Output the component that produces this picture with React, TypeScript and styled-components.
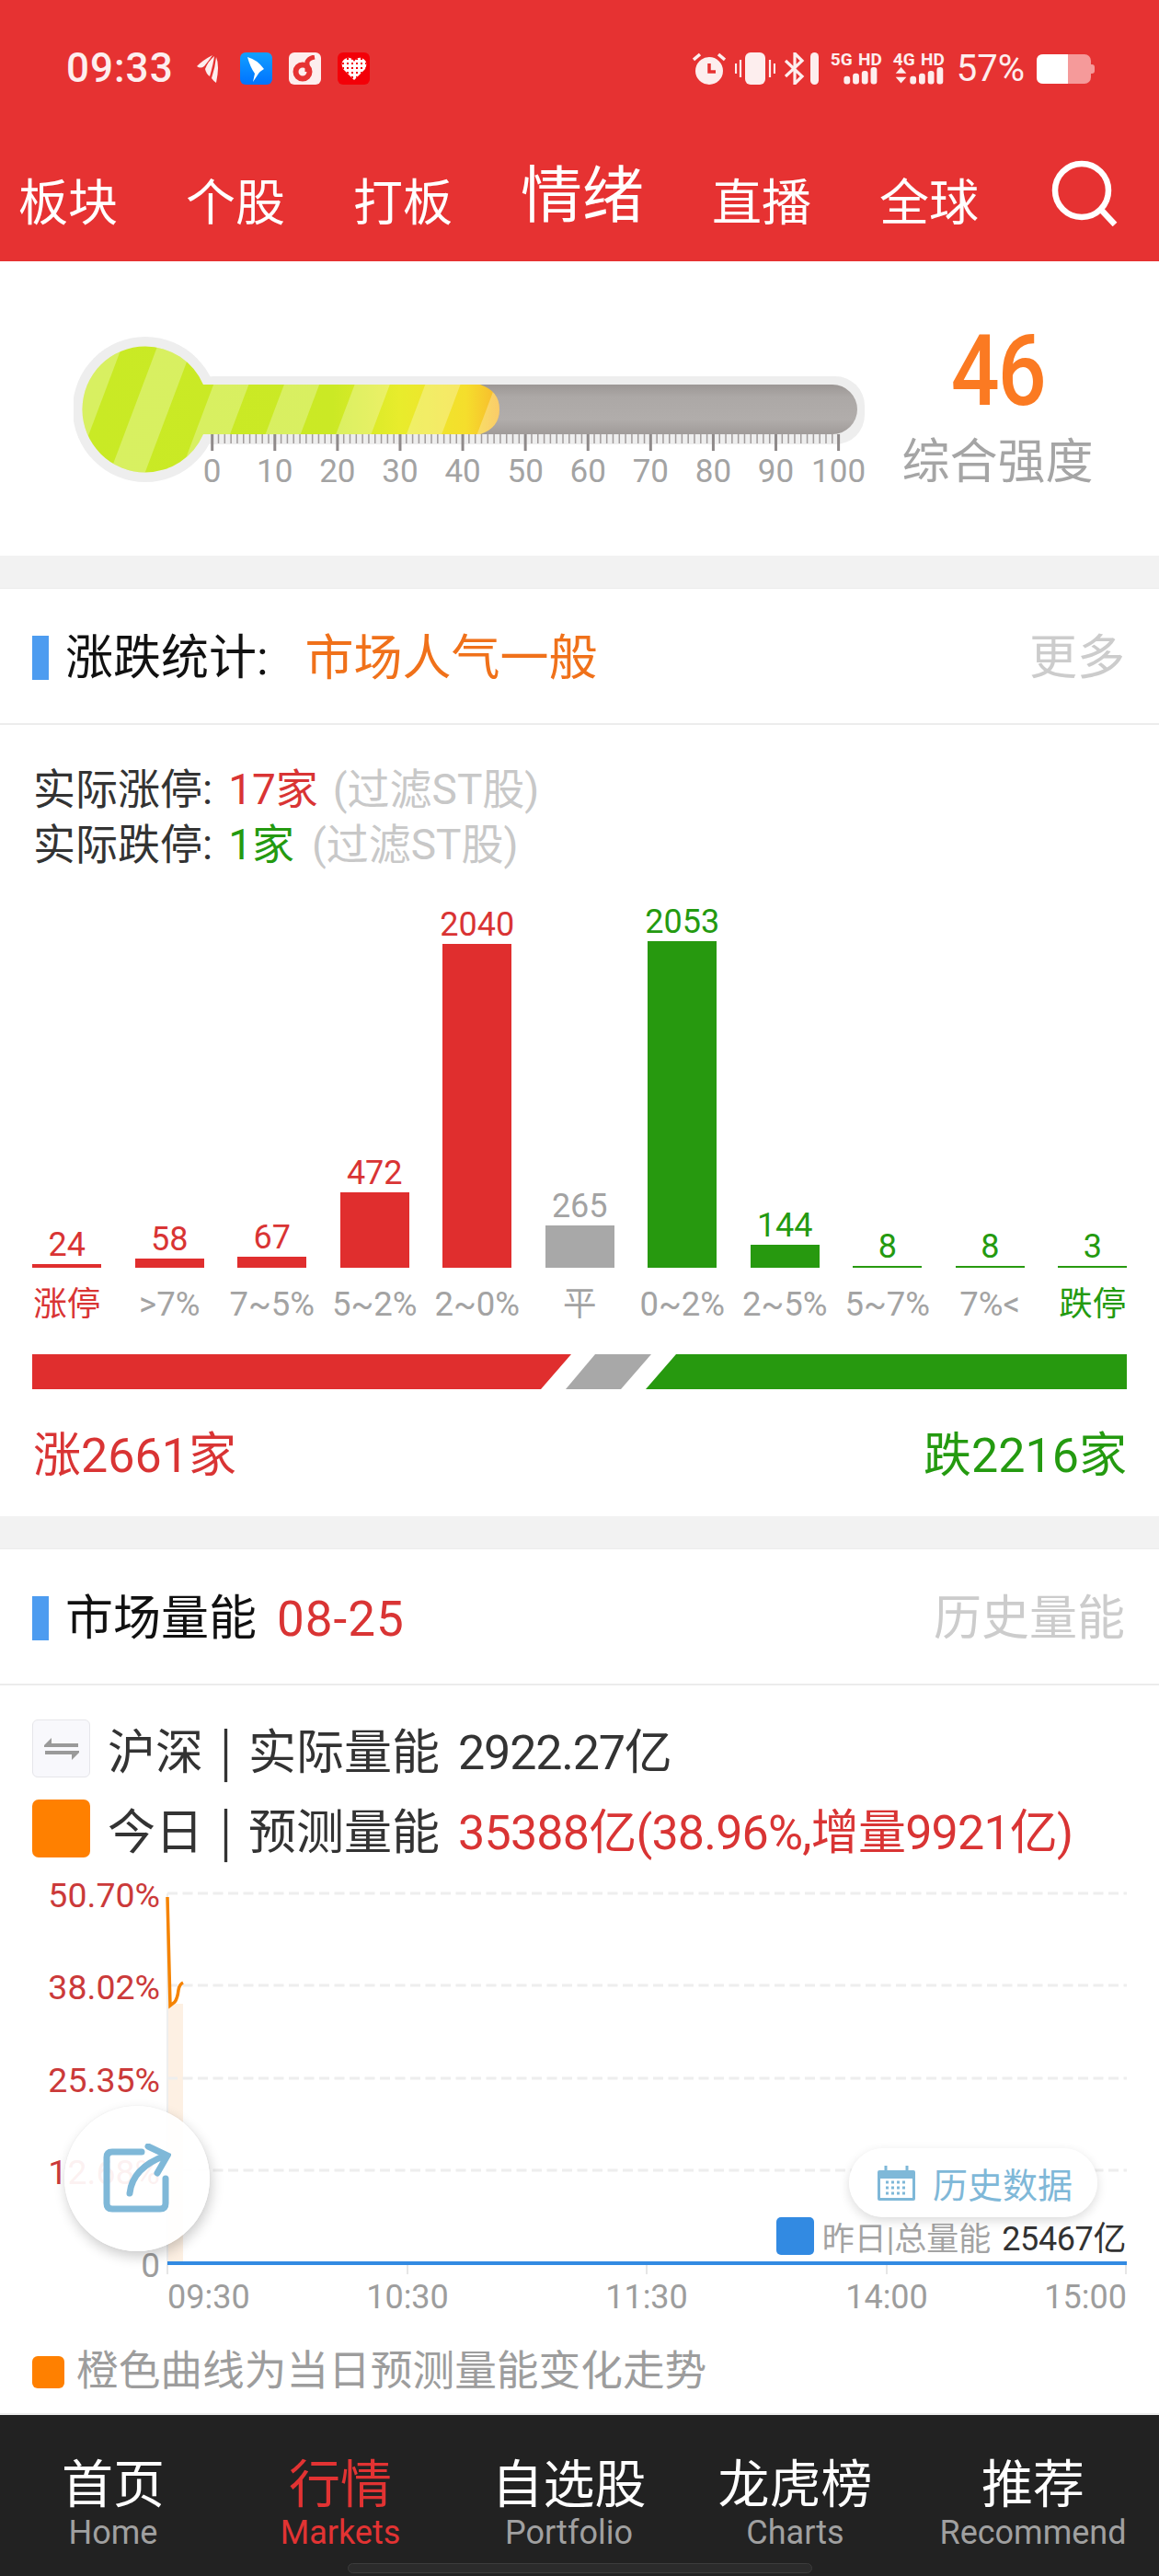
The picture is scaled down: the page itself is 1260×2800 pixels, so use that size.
import React from "react";
import styled, { createGlobalStyle } from "styled-components";

const RED = "#d93434";
const GREEN = "#249a10";
const BLUE_SOFT = "#7fb8d8";

const Global = createGlobalStyle`
  html, body { margin: 0; padding: 0; background: #f2f2f2; }
  body { font-family: Roboto, "Noto Sans CJK SC", sans-serif; }
  * { box-sizing: border-box; }
`;

const Page = styled.div`
  width: 1260px;
  height: 2800px;
  overflow: hidden;
  display: flex;
  flex-direction: column;
  background: #f2f2f2;
  font-family: Roboto, "Noto Sans CJK SC", sans-serif;
`;

/* header */
const Header = styled.header`
  height: 284px;
  background: #e63232;
  color: #fff;
  display: flex;
  flex-direction: column;
`;
const StatusBar = styled.div`
  display: flex;
  justify-content: space-between;
  align-items: center;
  padding: 57px 70px 0 72px;
  height: 92px;
  color: #fdeeee;
`;
const StatusGroup = styled.div`
  display: flex;
  align-items: center;
`;
const Clock = styled.span`
  font-size: 44px;
  font-weight: 500;
  letter-spacing: 1px;
  line-height: 35px;
  width: 141px;
`;
const AppTile = styled.div<{ $bg: string }>`
  width: 35px;
  height: 35px;
  border-radius: 6px;
  background: ${(p) => p.$bg};
  margin-right: 18px;
  display: flex;
  align-items: center;
  justify-content: center;
`;
const NetBlock = styled.div`
  width: 56px;
  height: 36px;
  margin-right: 12px;
  display: flex;
  flex-direction: column;
`;
const NetLabel = styled.div`
  font-size: 19px;
  font-weight: 700;
  line-height: 15px;
  height: 17px;
  display: flex;
  justify-content: space-between;
`;
const BatteryPct = styled.span`
  font-size: 40px;
  line-height: 35px;
  margin: 0 13px 0 1px;
`;
const Nav = styled.nav`
  display: flex;
  align-items: flex-end;
  gap: 74px;
  padding-left: 20px;
  margin-top: 80px;
`;
const NavItem = styled.div<{ $active?: boolean }>`
  font-size: ${(p) => (p.$active ? 67 : 54)}px;
  line-height: ${(p) => (p.$active ? 70 : 60)}px;
  padding-bottom: ${(p) => (p.$active ? 4 : 0)}px;
  white-space: nowrap;
`;
const SearchGlyph = styled.svg`
  width: 72px;
  height: 74px;
  margin-bottom: 6px;
  margin-left: 5px;
`;

/* gauge */
const GaugeSection = styled.section`
  height: 320px;
  background: #fff;
  display: flex;
  padding: 79px 0 0 80px;
`;
const GaugeSvg = styled.svg`
  width: 860px;
  height: 170px;
  flex: none;
  font-family: Roboto, sans-serif;
`;
const Strength = styled.div`
  margin-left: 41px;
  width: 207px;
  display: flex;
  flex-direction: column;
  align-items: center;
`;
const StrengthValue = styled.div`
  font-size: 107px;
  font-weight: 500;
  line-height: 90px;
  letter-spacing: -2px;
  color: #fb7a22;
  margin-top: -4px;
  transform: scaleX(0.87);
`;
const StrengthLabel = styled.div`
  margin-top: 24px;
  font-size: 52px;
  line-height: 60px;
  color: #a5a5a5;
  white-space: nowrap;
`;

/* cards */
const Card = styled.section`
  background: #fff;
  margin-top: 35px;
  border-top: 1px solid #ececec;
`;
const CardHead = styled.div`
  height: 148px;
  padding: 3px 37px 0 35px;
  display: flex;
  align-items: center;
  border-bottom: 2px solid #ececec;
`;
const Mark = styled.i`
  width: 18px;
  height: 48px;
  background: #4d9cf0;
  margin-right: 18px;
`;
const CardTitle = styled.h2`
  margin: 0;
  padding-top: 3px;
  font-size: 52px;
  font-weight: 400;
  line-height: 60px;
  color: #111;
`;
const CardTag = styled.span<{ $color: string; $gap: number; $track?: number }>`
  padding-top: 3px;
  font-size: 53px;
  line-height: 60px;
  color: ${(p) => p.$color};
  margin-left: ${(p) => p.$gap}px;
  letter-spacing: ${(p) => p.$track ?? 0}px;
`;
const CardMore = styled.span`
  padding-top: 3px;
  margin-left: auto;
  font-size: 52px;
  line-height: 60px;
  color: #cccccc;
`;

/* distribution */
const LimitBlock = styled.div`
  padding: 40px 0 0 36px;
`;
const LimitLine = styled.div`
  font-size: 46px;
  line-height: 60px;
  color: #333;
  white-space: nowrap;
`;
const Tone = styled.span<{ $color: string; $gap?: number }>`
  color: ${(p) => p.$color};
  margin-left: ${(p) => p.$gap ?? 0}px;
`;
const BarChart = styled.div`
  height: 430px;
  margin-left: 17px;
  display: grid;
  grid-template-columns: repeat(11, 111.5px);
  align-items: end;
`;
const BarColumn = styled.div`
  display: flex;
  flex-direction: column;
  align-items: center;
`;
const BarValue = styled.div<{ $color: string }>`
  font-size: 36px;
  line-height: 42px;
  color: ${(p) => p.$color};
`;
const Bar = styled.div<{ $color: string }>`
  width: 75px;
  background: ${(p) => p.$color};
`;
const BarLabels = styled.div`
  margin: 15px 0 0 17px;
  display: grid;
  grid-template-columns: repeat(11, 111.5px);
`;
const BarLabel = styled.div<{ $color: string }>`
  font-size: 36.5px;
  line-height: 50px;
  text-align: center;
  color: ${(p) => p.$color};
  white-space: nowrap;
`;
const SplitBar = styled.div`
  margin: 29px 0 0 35px;
  display: flex;
  height: 38px;
`;
const SplitRise = styled.div`
  width: 586px;
  background: #e02e2e;
  clip-path: polygon(0 0, 100% 0, calc(100% - 33px) 100%, 0 100%);
`;
const SplitFlat = styled.div`
  width: 93px;
  margin-left: -6px;
  background: #a8a8a8;
  clip-path: polygon(32px 0, 100% 0, calc(100% - 33px) 100%, 0 100%);
`;
const SplitFall = styled.div`
  width: 523px;
  margin-left: -6px;
  background: #27990f;
  clip-path: polygon(33px 0, 100% 0, 100% 100%, 0 100%);
`;
const Totals = styled.div`
  display: flex;
  justify-content: space-between;
  padding: 43px 35px 35px 36px;
  font-size: 52px;
  line-height: 60px;
`;

/* energy */
const EnergyRow = styled.div<{ $top: number }>`
  display: flex;
  align-items: center;
  height: 63px;
  padding-left: 35px;
  margin-top: ${(p) => p.$top}px;
  font-size: 52px;
  color: #333;
  white-space: nowrap;
`;
const SwapTile = styled.div`
  width: 63px;
  height: 63px;
  border-radius: 6px;
  background: #f8f8fc;
  border: 1px solid #e6e6ea;
  margin-right: 19px;
  display: flex;
  align-items: center;
  justify-content: center;
`;
const OrangeTile = styled.div`
  width: 63px;
  height: 63px;
  border-radius: 7px;
  background: #ff8000;
  margin-right: 19px;
`;
const Pipe = styled.span`
  font-family: "Noto Sans CJK SC", sans-serif;
  margin: 0 17.5px;
`;
const EnergyValue = styled.span<{ $color: string; $track: number }>`
  margin-left: 20px;
  letter-spacing: ${(p) => p.$track}px;
  color: ${(p) => p.$color};
`;
const ChartWrap = styled.div`
  position: relative;
  margin-top: 11px;
  height: 500px;
`;
const ChartSvg = styled.svg`
  display: block;
  width: 1260px;
  height: 500px;
  font-family: Roboto, sans-serif;
`;
const ShareFab = styled.div`
  position: absolute;
  left: 70px;
  top: 259px;
  width: 158px;
  height: 158px;
  border-radius: 50%;
  background: rgba(255, 255, 255, 0.93);
  box-shadow: 2px 6px 14px rgba(0, 0, 0, 0.2), 0 0 2px rgba(0, 0, 0, 0.06);
  display: flex;
  align-items: center;
  justify-content: center;
`;
const HistoryPill = styled.div`
  position: absolute;
  left: 923px;
  top: 305px;
  width: 270px;
  height: 75px;
  border-radius: 38px;
  background: rgba(255, 255, 255, 0.95);
  box-shadow: 0 4px 12px rgba(0, 0, 0, 0.14);
  color: ${BLUE_SOFT};
  font-size: 38px;
  display: flex;
  align-items: center;
  padding-left: 31px;
  gap: 19px;
  white-space: nowrap;
`;
const Legend = styled.div`
  position: absolute;
  right: 36px;
  top: 379px;
  height: 42px;
  display: flex;
  align-items: center;
  font-size: 35px;
  color: #a3a3a3;
  white-space: nowrap;
`;
const LegendSwatch = styled.i`
  width: 41px;
  height: 41px;
  border-radius: 5px;
  background: #328ae2;
  margin-right: 9px;
`;
const LegendValue = styled.span`
  margin-left: 12px;
  font-size: 36px;
  letter-spacing: -0.4px;
  color: #333;
`;
const Note = styled.div`
  margin-top: 20px;
  height: 73px;
  padding: 0 0 0 35px;
  display: flex;
  align-items: flex-start;
  font-size: 45.7px;
  line-height: 56px;
  color: #9d9d9d;
  white-space: nowrap;
`;
const NoteSwatch = styled.i`
  width: 35px;
  height: 35px;
  border-radius: 6px;
  background: #ff8000;
  margin: 11px 13px 0 0;
`;

/* tab bar */
const TabBar = styled.footer`
  margin-top: auto;
  height: 177px;
  border-top: 2px solid #eeeeee;
  background: #222222;
  display: flex;
  flex-direction: column;
`;
const Tabs = styled.div`
  display: grid;
  grid-template-columns: 246px 248px 249px 243px 274px;
  padding-top: 46px;
`;
const Tab = styled.div<{ $active?: boolean }>`
  display: flex;
  flex-direction: column;
  align-items: center;
  color: ${(p) => (p.$active ? "#e23333" : "#fff")};
`;
const TabZh = styled.div`
  font-size: 56px;
  line-height: 60px;
  white-space: nowrap;
`;
const TabEn = styled.div<{ $active?: boolean }>`
  font-size: 36px;
  line-height: 45px;
  color: ${(p) => (p.$active ? "#e23333" : "#a0a0a0")};
`;
const HomeIndicator = styled.div`
  width: 505px;
  height: 11px;
  margin: 10px auto 0;
  border-radius: 6px;
  background: #2b2b2b;
  border: 1px solid #3c3c3c;
`;

const bars = [
  { v: 24, h: 4, c: RED, b: "#e02e2e", l: "涨停", lc: RED },
  { v: 58, h: 10, c: RED, b: "#e02e2e", l: ">7%", lc: "#a3a3a3" },
  { v: 67, h: 12, c: RED, b: "#e02e2e", l: "7~5%", lc: "#a3a3a3" },
  { v: 472, h: 82, c: RED, b: "#e02e2e", l: "5~2%", lc: "#a3a3a3" },
  { v: 2040, h: 352, c: RED, b: "#e02e2e", l: "2~0%", lc: "#a3a3a3" },
  { v: 265, h: 46, c: "#a3a3a3", b: "#a8a8a8", l: "平", lc: "#a3a3a3" },
  { v: 2053, h: 355, c: GREEN, b: "#27990f", l: "0~2%", lc: "#a3a3a3" },
  { v: 144, h: 25, c: GREEN, b: "#27990f", l: "2~5%", lc: "#a3a3a3" },
  { v: 8, h: 2, c: GREEN, b: "#27990f", l: "5~7%", lc: "#a3a3a3" },
  { v: 8, h: 2, c: GREEN, b: "#27990f", l: "7%<", lc: "#a3a3a3" },
  { v: 3, h: 2, c: GREEN, b: "#27990f", l: "跌停", lc: GREEN },
];

const Gauge = () => {
  const ticks = Array.from({ length: 101 }, (_, i) => i);
  const stripes = Array.from({ length: 9 }, (_, i) => 233 + (i - 3) * 76.7);
  return (
    <GaugeSvg viewBox="80 363 860 170">
      <defs>
        <linearGradient id="fillGrad" gradientUnits="userSpaceOnUse" x1="90" y1="0" x2="543" y2="0">
          <stop offset="0" stopColor="#c9ea25" />
          <stop offset="0.6" stopColor="#cbe925" />
          <stop offset="0.76" stopColor="#e8ec2c" />
          <stop offset="0.92" stopColor="#f5de2c" />
          <stop offset="1" stopColor="#f8b82e" />
        </linearGradient>
        <linearGradient id="tubeGrad" x1="0" y1="0" x2="0" y2="1">
          <stop offset="0" stopColor="#9c9795" />
          <stop offset="0.25" stopColor="#aca8a6" />
          <stop offset="0.7" stopColor="#b1adab" />
          <stop offset="1" stopColor="#a09b99" />
        </linearGradient>
        <clipPath id="fillClip">
          <circle cx="158" cy="445" r="68.5" />
          <path d="M200 418 H522 Q543 425 543 445 Q543 465 522 472 H200 Z" />
        </clipPath>
      </defs>
      <circle cx="158" cy="445" r="79" fill="#eeeeee" />
      <rect x="200" y="409" width="740" height="74" rx="32" fill="#eeeeee" />
      <rect x="480" y="418" width="452" height="54" rx="27" fill="url(#tubeGrad)" />
      <g clipPath="url(#fillClip)">
        <rect x="80" y="360" width="480" height="170" fill="url(#fillGrad)" />
        {stripes.map((x) => (
          <polygon
            key={x}
            points={`${x + 21},360 ${x + 59.3},360 ${x - 4.8},530 ${x - 43},530`}
            fill="#ffffff"
            opacity="0.28"
          />
        ))}
      </g>
      {ticks.map((i) => {
        const x = 230.7 + i * 6.809;
        const major = i % 10 === 0;
        return (
          <rect
            key={i}
            x={x - (major ? 1.5 : 0.75)}
            y="472"
            width={major ? 3 : 1.5}
            height={major ? 18 : 10}
            fill={major ? "#8f8a8a" : "#a19c9c"}
          />
        );
      })}
      {ticks
        .filter((i) => i % 10 === 0)
        .map((i) => (
          <text key={i} x={230.7 + i * 6.809} y="524" fontSize="35" textAnchor="middle" fill="#a3a3a3">
            {i}
          </text>
        ))}
    </GaugeSvg>
  );
};

const EnergyChart = () => {
  const grid = [2058, 2158, 2259, 2359];
  const yLabels = [
    { t: "50.70%", y: 2073 },
    { t: "38.02%", y: 2173 },
    { t: "25.35%", y: 2274 },
    { t: "12.68%", y: 2374 },
  ];
  const xTicks = [182, 443, 703, 964, 1224];
  return (
    <ChartSvg viewBox="0 2030 1260 500">
      <rect x="182" y="2178" width="17" height="282" fill="#fdf0e3" />
      <line x1="182" y1="2058" x2="182" y2="2472" stroke="#eeeeee" strokeWidth="2" />
      {grid.map((y) => (
        <line key={y} x1="182" y1={y} x2="1225" y2={y} stroke="#eeeeee" strokeWidth="3" strokeDasharray="11 5.5" />
      ))}
      {xTicks.map((x) => (
        <line key={x} x1={x} y1="2460" x2={x} y2="2472" stroke="#e6e6e6" strokeWidth="2" />
      ))}
      <path
        d="M182 2062 L185 2180 L190 2176 Q193 2172 194 2163 Q195 2157 199 2155"
        fill="none"
        stroke="#f58300"
        strokeWidth="3.5"
      />
      <line x1="182" y1="2460" x2="1225" y2="2460" stroke="#328ae2" strokeWidth="4" />
      {yLabels.map((l) => (
        <text key={l.t} x="174" y={l.y} fontSize="37.5" textAnchor="end" fill="#cb3a3a">
          {l.t}
        </text>
      ))}
      <text x="174" y="2475" fontSize="37" textAnchor="end" fill="#9d9d9d">
        0
      </text>
      <text x="182" y="2509" fontSize="36" fill="#9d9d9d">09:30</text>
      <text x="443" y="2509" fontSize="36" textAnchor="middle" fill="#9d9d9d">10:30</text>
      <text x="703" y="2509" fontSize="36" textAnchor="middle" fill="#9d9d9d">11:30</text>
      <text x="964" y="2509" fontSize="36" textAnchor="middle" fill="#9d9d9d">14:00</text>
      <text x="1225" y="2509" fontSize="36" textAnchor="end" fill="#9d9d9d">15:00</text>
    </ChartSvg>
  );
};

const SignalBars = ({ arrows }: { arrows?: boolean }) => (
  <svg width="56" height="20" viewBox="0 0 56 20">
    {arrows && <path d="M2 7 L8 0 L14 7 Z M2 11 L14 11 L8 18 Z" fill="#fdeeee" />}
    {[
      { x: 18, h: 9 },
      { x: 28, h: 12 },
      { x: 38, h: 15 },
      { x: 48, h: 19 },
    ].map((b) => (
      <rect key={b.x} x={arrows ? b.x : b.x - 4} y={19 - b.h} width="7" height={b.h} rx="3" fill="#fdeeee" />
    ))}
  </svg>
);

export default function App() {
  return (
    <Page>
      <Global />
      <Header>
        <StatusBar>
          <StatusGroup>
            <Clock>09:33</Clock>
            <svg width="26" height="32" viewBox="0 0 26 32" style={{ marginRight: 22 }}>
              <path d="M1 13 Q8 6 18 1 Q14 7 9 13 Q5 16 1 13 Z" fill="#fdeeee" />
              <path d="M10 16 Q13 8 20 2 Q19 10 15 24 Q11 21 10 16 Z" fill="#fdeeee" />
              <path d="M17 26 Q21 14 22 3 Q26 12 22 31 Q19 29 17 26 Z" fill="#fdeeee" />
            </svg>
            <AppTile $bg="linear-gradient(180deg,#12a0ff,#0072ff)">
              <svg width="25" height="30" viewBox="0 0 25 30">
                <path d="M3 2 Q14 5 21 15 Q16 18 15 20 L9 29 L11 20 Q6 13 3 2 Z" fill="#fff" />
              </svg>
            </AppTile>
            <AppTile $bg="#fdeeee">
              <svg width="27" height="29" viewBox="0 0 27 29">
                <circle cx="11" cy="18" r="7.5" fill="none" stroke="#e63232" strokeWidth="6" />
                <path d="M16 18 V7 Q18 3 24 2" fill="none" stroke="#e63232" strokeWidth="5" />
              </svg>
            </AppTile>
            <AppTile $bg="#f30008">
              <svg width="28" height="26" viewBox="0 0 28 26">
                <defs>
                  <pattern id="heartDots" width="5" height="5" patternUnits="userSpaceOnUse">
                    <rect x="1" y="1" width="2" height="2" fill="#f30008" />
                  </pattern>
                </defs>
                <path d="M14 25 L2 13 Q-2 4 6 1 Q11 0 14 5 Q17 0 22 1 Q30 4 26 13 Z" fill="#fff" />
                <path d="M14 25 L2 13 Q-2 4 6 1 Q11 0 14 5 Q17 0 22 1 Q30 4 26 13 Z" fill="url(#heartDots)" />
              </svg>
            </AppTile>
          </StatusGroup>
          <StatusGroup>
            <svg width="36" height="35" viewBox="0 0 36 35" style={{ marginRight: 10 }}>
              <circle cx="18" cy="20" r="15" fill="#fdeeee" />
              <path d="M18 12 V21 H25" fill="none" stroke="#e63232" strokeWidth="3.5" />
              <path d="M1 8 L8 2 M35 8 L28 2" stroke="#fdeeee" strokeWidth="3.5" />
            </svg>
            <svg width="44" height="35" viewBox="0 0 44 35" style={{ marginRight: 10 }}>
              <rect x="11" y="0" width="22" height="35" rx="6" fill="#fdeeee" />
              <path d="M1 12 V23 M6 8 V27 M38 8 V27 M43 12 V23" stroke="#fdeeee" strokeWidth="2.2" />
            </svg>
            <svg width="38" height="35" viewBox="0 0 38 35" style={{ marginRight: 12 }}>
              <path d="M1 9 L19 26 L11 34 V1 L19 9 L1 26" fill="none" stroke="#fdeeee" strokeWidth="3.2" />
              <rect x="28" y="0" width="9" height="35" rx="4.5" fill="#fdeeee" />
            </svg>
            <NetBlock>
              <NetLabel>
                <span>5G</span>
                <span>HD</span>
              </NetLabel>
              <SignalBars />
            </NetBlock>
            <NetBlock>
              <NetLabel>
                <span>4G</span>
                <span>HD</span>
              </NetLabel>
              <SignalBars arrows />
            </NetBlock>
            <BatteryPct>57%</BatteryPct>
            <svg width="63" height="32" viewBox="0 0 63 32">
              <rect x="0" y="0" width="59" height="32" rx="7" fill="#f59a9a" />
              <path d="M7 0 H34 V32 H7 Q0 32 0 25 V7 Q0 0 7 0 Z" fill="#fff" />
              <path d="M59 11 H60 Q63 11 63 14 V18 Q63 21 60 21 H59 Z" fill="#f59a9a" />
            </svg>
          </StatusGroup>
        </StatusBar>
        <Nav>
          <NavItem>板块</NavItem>
          <NavItem>个股</NavItem>
          <NavItem>打板</NavItem>
          <NavItem $active>情绪</NavItem>
          <NavItem>直播</NavItem>
          <NavItem>全球</NavItem>
          <SearchGlyph viewBox="0 0 72 74">
            <circle cx="33" cy="35" r="29" fill="none" stroke="#fff" strokeWidth="6.5" />
            <path d="M55 57 L69 72" stroke="#fff" strokeWidth="6.5" />
          </SearchGlyph>
        </Nav>
      </Header>

      <GaugeSection>
        <Gauge />
        <Strength>
          <StrengthValue>46</StrengthValue>
          <StrengthLabel>综合强度</StrengthLabel>
        </Strength>
      </GaugeSection>

      <Card>
        <CardHead>
          <Mark />
          <CardTitle>涨跌统计:</CardTitle>
          <CardTag $color="#f0711a" $gap={40}>市场人气一般</CardTag>
          <CardMore>更多</CardMore>
        </CardHead>
        <LimitBlock>
          <LimitLine>
            实际涨停:<Tone $color={RED} $gap={17}>17家</Tone>
            <Tone $color="#c8c8c8" $gap={16}>(过滤ST股)</Tone>
          </LimitLine>
          <LimitLine>
            实际跌停:<Tone $color={GREEN} $gap={17}>1家</Tone>
            <Tone $color="#c8c8c8" $gap={19}>(过滤ST股)</Tone>
          </LimitLine>
        </LimitBlock>
        <BarChart>
          {bars.map((b, i) => (
            <BarColumn key={i}>
              <BarValue $color={b.c}>{b.v}</BarValue>
              <Bar $color={b.b} style={{ height: b.h }} />
            </BarColumn>
          ))}
        </BarChart>
        <BarLabels>
          {bars.map((b, i) => (
            <BarLabel key={i} $color={b.lc}>{b.l}</BarLabel>
          ))}
        </BarLabels>
        <SplitBar>
          <SplitRise />
          <SplitFlat />
          <SplitFall />
        </SplitBar>
        <Totals>
          <Tone $color={RED}>涨2661家</Tone>
          <Tone $color={GREEN}>跌2216家</Tone>
        </Totals>
      </Card>

      <Card>
        <CardHead>
          <Mark />
          <CardTitle>市场量能</CardTitle>
          <CardTag $color={RED} $gap={22} $track={1}>08-25</CardTag>
          <CardMore>历史量能</CardMore>
        </CardHead>
        <EnergyRow $top={37}>
          <SwapTile>
            <svg width="40" height="30" viewBox="0 0 40 30">
              <path d="M1 11 L9 3 V9 H38 V13 H1 Z" fill="#9a9a9a" />
              <path d="M39 19 L31 27 V21 H2 V17 H39 Z" fill="#9a9a9a" />
            </svg>
          </SwapTile>
          沪深<Pipe>|</Pipe>实际量能
          <EnergyValue $color="#333" $track={-1.2}>2922.27亿</EnergyValue>
        </EnergyRow>
        <EnergyRow $top={24}>
          <OrangeTile />
          今日<Pipe>|</Pipe>预测量能
          <EnergyValue $color={RED} $track={-0.8}>35388亿(38.96%,增量9921亿)</EnergyValue>
        </EnergyRow>
        <ChartWrap>
          <EnergyChart />
          <ShareFab>
            <svg width="74" height="76" viewBox="0 0 74 76">
              <path d="M42 9 H10 Q4 9 4 15 V65 Q4 71 10 71 H62 Q68 71 68 65 V38" fill="none" stroke={BLUE_SOFT} strokeWidth="7" strokeLinecap="round" />
              <path d="M29 54 Q32 26 68 13" fill="none" stroke={BLUE_SOFT} strokeWidth="7" strokeLinecap="round" />
              <path d="M49 3 L70 13 L59 32" fill="none" stroke={BLUE_SOFT} strokeWidth="7" strokeLinecap="round" />
            </svg>
          </ShareFab>
          <Legend>
            <LegendSwatch />
            昨日|总量能
            <LegendValue>25467亿</LegendValue>
          </Legend>
          <HistoryPill>
            <svg width="41" height="38" viewBox="0 0 41 38">
              <path d="M2 5 H39 Q41 5 41 7 V36 Q41 38 39 38 H2 Q0 38 0 36 V7 Q0 5 2 5 Z" fill={BLUE_SOFT} />
              <rect x="3" y="14" width="35" height="21" fill="#fff" />
              <path d="M9 0 V8 M32 0 V8" stroke={BLUE_SOFT} strokeWidth="3" />
              <path d="M9 18 H32 M9 24 H32 M9 30 H32" stroke={BLUE_SOFT} strokeWidth="3" strokeDasharray="3 3" />
            </svg>
            历史数据
          </HistoryPill>
        </ChartWrap>
        <Note>
          <NoteSwatch />
          橙色曲线为当日预测量能变化走势
        </Note>
      </Card>

      <TabBar>
        <Tabs>
          <Tab>
            <TabZh>首页</TabZh>
            <TabEn>Home</TabEn>
          </Tab>
          <Tab $active>
            <TabZh>行情</TabZh>
            <TabEn $active>Markets</TabEn>
          </Tab>
          <Tab>
            <TabZh>自选股</TabZh>
            <TabEn>Portfolio</TabEn>
          </Tab>
          <Tab>
            <TabZh>龙虎榜</TabZh>
            <TabEn>Charts</TabEn>
          </Tab>
          <Tab>
            <TabZh>推荐</TabZh>
            <TabEn>Recommend</TabEn>
          </Tab>
        </Tabs>
        <HomeIndicator />
      </TabBar>
    </Page>
  );
}
